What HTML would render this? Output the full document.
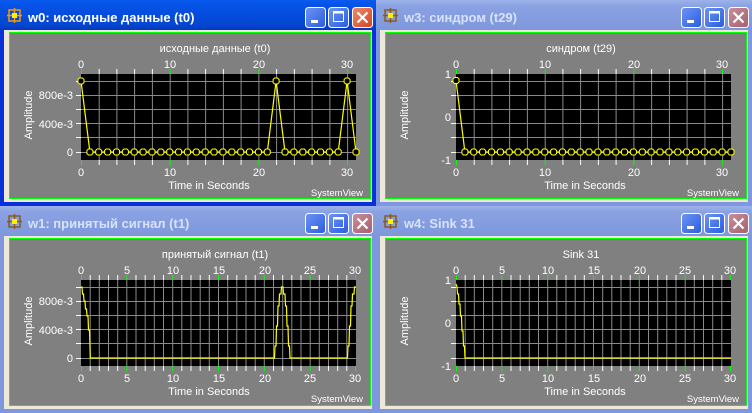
<!DOCTYPE html>
<html><head><meta charset="utf-8"><style>
html,body{margin:0;padding:0;background:#ECE9D8;}
svg{display:block;font-family:"Liberation Sans","DejaVu Sans",sans-serif;}
</style></head><body>
<svg width="752" height="413" viewBox="0 0 752 413" xmlns="http://www.w3.org/2000/svg">
<defs>
<linearGradient id="act" x1="0" y1="0" x2="0" y2="1"><stop offset="0" stop-color="#0A5BF0"/><stop offset="0.15" stop-color="#0653E8"/><stop offset="0.8" stop-color="#0447D2"/><stop offset="1" stop-color="#0339C0"/></linearGradient>
<linearGradient id="ina" x1="0" y1="0" x2="0" y2="1"><stop offset="0" stop-color="#9DB2EA"/><stop offset="0.2" stop-color="#8AA2E2"/><stop offset="1" stop-color="#7E98DC"/></linearGradient>
<linearGradient id="btn" x1="0" y1="0" x2="1" y2="1"><stop offset="0" stop-color="#6E95F5"/><stop offset="1" stop-color="#2A5BDD"/></linearGradient>
<linearGradient id="cls" x1="0" y1="0" x2="1" y2="1"><stop offset="0" stop-color="#F08C6A"/><stop offset="1" stop-color="#D4411F"/></linearGradient>
<linearGradient id="clsi" x1="0" y1="0" x2="1" y2="1"><stop offset="0" stop-color="#C98E9A"/><stop offset="1" stop-color="#A5606E"/></linearGradient>
<marker id="dot" markerWidth="8" markerHeight="8" refX="4" refY="4" markerUnits="userSpaceOnUse"><polygon points="2.5,1 5.5,1 7,2.5 7,5.5 5.5,7 2.5,7 1,5.5 1,2.5" fill="#000" stroke="#FFFF00" stroke-width="1"/></marker>
</defs>

<!-- ===== Window w0 (active) ===== -->
<g>
<rect x="0" y="0" width="376" height="206" fill="#0831D9"/>
<rect x="0" y="0" width="376" height="30" fill="url(#act)"/>
<rect x="4" y="30" width="368" height="172" fill="#ECE9D8"/>
<g transform="translate(8,9)"><rect x="1" y="1" width="11" height="11" fill="none" stroke="#F29A10" stroke-width="1.5"/><line x1="6.5" y1="-1" x2="6.5" y2="14" stroke="#F29A10" stroke-width="1.5"/><line x1="-1" y1="6.5" x2="14" y2="6.5" stroke="#F29A10" stroke-width="1.5"/><rect x="4" y="4" width="5" height="5" fill="#FFF200"/></g>
<text x="28" y="22" font-size="13" font-weight="bold" fill="#fff">w0: исходные данные (t0)</text>
<rect x="305.5" y="7.5" width="20" height="20" rx="3" fill="url(#btn)" stroke="#fff"/><rect x="311" y="20" width="7" height="3" fill="#fff"/>
<rect x="328.5" y="7.5" width="20" height="20" rx="3" fill="url(#btn)" stroke="#fff"/><rect x="333.5" y="11.5" width="10" height="10" fill="none" stroke="#fff"/><rect x="333.5" y="11.5" width="10" height="2" fill="#fff"/>
<rect x="352.5" y="7.5" width="20" height="20" rx="3" fill="url(#cls)" stroke="#fff"/><path d="M357.5 12.5 L367.5 22.5 M367.5 12.5 L357.5 22.5" stroke="#fff" stroke-width="2.2"/>
</g>

<!-- ===== Window w3 ===== -->
<g transform="translate(376,0)">
<rect x="0" y="0" width="376" height="206" fill="#7F97DE"/>
<rect x="0" y="0" width="376" height="30" fill="url(#ina)"/>
<rect x="4" y="30" width="368" height="172" fill="#ECE9D8"/>
<g transform="translate(8,9)"><rect x="1" y="1" width="11" height="11" fill="none" stroke="#8A5A20" stroke-width="1.5"/><line x1="6.5" y1="-1" x2="6.5" y2="14" stroke="#8A5A20" stroke-width="1.5"/><line x1="-1" y1="6.5" x2="14" y2="6.5" stroke="#8A5A20" stroke-width="1.5"/><rect x="4" y="4" width="5" height="5" fill="#FFF200"/></g>
<text x="28" y="22" font-size="13" font-weight="bold" fill="#D8E2FA">w3: синдром (t29)</text>
<rect x="305.5" y="7.5" width="20" height="20" rx="3" fill="url(#btn)" stroke="#fff"/><rect x="311" y="20" width="7" height="3" fill="#fff"/>
<rect x="328.5" y="7.5" width="20" height="20" rx="3" fill="url(#btn)" stroke="#fff"/><rect x="333.5" y="11.5" width="10" height="10" fill="none" stroke="#fff"/><rect x="333.5" y="11.5" width="10" height="2" fill="#fff"/>
<rect x="352.5" y="7.5" width="20" height="20" rx="3" fill="url(#clsi)" stroke="#fff"/><path d="M357.5 12.5 L367.5 22.5 M367.5 12.5 L357.5 22.5" stroke="#fff" stroke-width="2.2"/>
</g>

<!-- ===== Window w1 ===== -->
<g transform="translate(0,206)">
<rect x="0" y="0" width="376" height="207" fill="#7F97DE"/>
<rect x="0" y="0" width="376" height="30" fill="url(#ina)"/>
<rect x="4" y="30" width="368" height="173" fill="#ECE9D8"/>
<g transform="translate(8,9)"><rect x="1" y="1" width="11" height="11" fill="none" stroke="#8A5A20" stroke-width="1.5"/><line x1="6.5" y1="-1" x2="6.5" y2="14" stroke="#8A5A20" stroke-width="1.5"/><line x1="-1" y1="6.5" x2="14" y2="6.5" stroke="#8A5A20" stroke-width="1.5"/><rect x="4" y="4" width="5" height="5" fill="#FFF200"/></g>
<text x="28" y="22" font-size="13" font-weight="bold" fill="#D8E2FA">w1: принятый сигнал (t1)</text>
<rect x="305.5" y="7.5" width="20" height="20" rx="3" fill="url(#btn)" stroke="#fff"/><rect x="311" y="20" width="7" height="3" fill="#fff"/>
<rect x="328.5" y="7.5" width="20" height="20" rx="3" fill="url(#btn)" stroke="#fff"/><rect x="333.5" y="11.5" width="10" height="10" fill="none" stroke="#fff"/><rect x="333.5" y="11.5" width="10" height="2" fill="#fff"/>
<rect x="352.5" y="7.5" width="20" height="20" rx="3" fill="url(#clsi)" stroke="#fff"/><path d="M357.5 12.5 L367.5 22.5 M367.5 12.5 L357.5 22.5" stroke="#fff" stroke-width="2.2"/>
</g>

<!-- ===== Window w4 ===== -->
<g transform="translate(376,206)">
<rect x="0" y="0" width="376" height="207" fill="#7F97DE"/>
<rect x="0" y="0" width="376" height="30" fill="url(#ina)"/>
<rect x="4" y="30" width="368" height="173" fill="#ECE9D8"/>
<g transform="translate(8,9)"><rect x="1" y="1" width="11" height="11" fill="none" stroke="#8A5A20" stroke-width="1.5"/><line x1="6.5" y1="-1" x2="6.5" y2="14" stroke="#8A5A20" stroke-width="1.5"/><line x1="-1" y1="6.5" x2="14" y2="6.5" stroke="#8A5A20" stroke-width="1.5"/><rect x="4" y="4" width="5" height="5" fill="#FFF200"/></g>
<text x="28" y="22" font-size="13" font-weight="bold" fill="#D8E2FA">w4: Sink 31</text>
<rect x="305.5" y="7.5" width="20" height="20" rx="3" fill="url(#btn)" stroke="#fff"/><rect x="311" y="20" width="7" height="3" fill="#fff"/>
<rect x="328.5" y="7.5" width="20" height="20" rx="3" fill="url(#btn)" stroke="#fff"/><rect x="333.5" y="11.5" width="10" height="10" fill="none" stroke="#fff"/><rect x="333.5" y="11.5" width="10" height="2" fill="#fff"/>
<rect x="352.5" y="7.5" width="20" height="20" rx="3" fill="url(#clsi)" stroke="#fff"/><path d="M357.5 12.5 L367.5 22.5 M367.5 12.5 L357.5 22.5" stroke="#fff" stroke-width="2.2"/>
</g>

<!-- ===== Plot panels ===== -->
<!-- panel common: gray with green border -->
<g fill="#808080" stroke="#00FF00" stroke-width="1">
<rect x="9.5" y="32.5" width="361" height="166"/>
<rect x="385.5" y="32.5" width="361" height="166"/>
<rect x="9.5" y="238.5" width="361" height="167"/>
<rect x="385.5" y="238.5" width="361" height="167"/>
</g>

<!-- Plot w0 -->
<g transform="translate(0,0)">
<rect x="81" y="74" width="275" height="86" fill="#000"/>
<g stroke="#8A8A8A" stroke-width="1">
<path d="M81 81.5H356M81 95.5H356M81 109.5H356M81 123.5H356M81 137.5H356M81 152.5H356"/>
<path d="M99.2 74V160M116.9 74V160M134.6 74V160M152.4 74V160M170.2 74V160M187.9 74V160M205.6 74V160M223.4 74V160M241.1 74V160M258.9 74V160M276.6 74V160M294.4 74V160M312.1 74V160M329.9 74V160M347.6 74V160"/>
</g>
<g stroke="#fff"><path d="M99.2 69V74M116.9 69V74M134.6 69V74M152.4 69V74M187.9 69V74M205.6 69V74M223.4 69V74M241.1 69V74M276.6 69V74M294.4 69V74M312.1 69V74M329.9 69V74M99.2 160V165M116.9 160V165M134.6 160V165M152.4 160V165M187.9 160V165M205.6 160V165M223.4 160V165M241.1 160V165M276.6 160V165M294.4 160V165M312.1 160V165M329.9 160V165M76 81.5H81M76 109.5H81M76 137.5H81"/></g>
<g stroke="#00FF00"><path d="M81.5 69V74M170.2 69V74M258.9 69V74M347.6 69V74M81.5 160V165M170.2 160V165M258.9 160V165M347.6 160V165"/></g>
<g stroke="#fff"><path d="M76 95.5H81M76 123.5H81M76 152.5H81"/></g>
<polyline fill="none" stroke="#FFFF00" stroke-width="1.2" marker-start="url(#dot)" marker-mid="url(#dot)" marker-end="url(#dot)" points="81,81 89.9,152 98.7,152 107.6,152 116.5,152 125.4,152 134.2,152 143.1,152 152,152 160.8,152 169.7,152 178.6,152 187.4,152 196.3,152 205.2,152 214,152 222.9,152 231.8,152 240.7,152 249.5,152 258.4,152 267.3,152 276.1,81 285,152 293.9,152 302.8,152 311.6,152 320.5,152 329.4,152 338.2,152 347.1,81 356,152"/>
<g fill="#fff" font-size="11">
<text x="215" y="52" text-anchor="middle">исходные данные (t0)</text>
<text x="81" y="68" text-anchor="middle">0</text><text x="170" y="68" text-anchor="middle">10</text><text x="259" y="68" text-anchor="middle">20</text><text x="347" y="68" text-anchor="middle">30</text>
<text x="81" y="176" text-anchor="middle">0</text><text x="170" y="176" text-anchor="middle">10</text><text x="259" y="176" text-anchor="middle">20</text><text x="347" y="176" text-anchor="middle">30</text>
<text x="73" y="99" text-anchor="end">800e-3</text><text x="73" y="128" text-anchor="end">400e-3</text><text x="73" y="156" text-anchor="end">0</text>
<text x="209" y="189" text-anchor="middle">Time in Seconds</text>
<text x="363" y="196" text-anchor="end" font-size="9.5">SystemView</text>
<text transform="translate(32,115) rotate(-90)" text-anchor="middle">Amplitude</text>
</g>
</g>

<!-- Plot w3 -->
<g transform="translate(376,0)">
<rect x="80" y="74" width="275" height="86" fill="#000"/>
<g stroke="#8A8A8A" stroke-width="1">
<path d="M80 81.5H355M80 95.5H355M80 109.5H355M80 123.5H355M80 137.5H355M80 152.5H355"/>
<path d="M98.2 74V160M115.9 74V160M133.6 74V160M151.4 74V160M169.2 74V160M186.9 74V160M204.6 74V160M222.4 74V160M240.1 74V160M257.9 74V160M275.6 74V160M293.4 74V160M311.1 74V160M328.9 74V160M346.6 74V160"/>
</g>
<g stroke="#fff"><path d="M98.2 69V74M115.9 69V74M133.6 69V74M151.4 69V74M186.9 69V74M204.6 69V74M222.4 69V74M240.1 69V74M275.6 69V74M293.4 69V74M311.1 69V74M328.9 69V74M98.2 160V165M115.9 160V165M133.6 160V165M151.4 160V165M186.9 160V165M204.6 160V165M222.4 160V165M240.1 160V165M275.6 160V165M293.4 160V165M311.1 160V165M328.9 160V165M75 81.5H80M75 95.5H80M75 109.5H80M75 123.5H80M75 137.5H80M75 152.5H80"/></g>
<g stroke="#00FF00"><path d="M80.5 69V74M169.2 69V74M257.9 69V74M346.6 69V74M80.5 160V165M169.2 160V165M257.9 160V165M346.6 160V165"/></g>
<polyline fill="none" stroke="#FFFF00" stroke-width="1.2" marker-start="url(#dot)" marker-mid="url(#dot)" marker-end="url(#dot)" points="80,80.5 88.9,152 97.7,152 106.6,152 115.5,152 124.4,152 133.2,152 142.1,152 151,152 159.8,152 168.7,152 177.6,152 186.4,152 195.3,152 204.2,152 213,152 221.9,152 230.8,152 239.7,152 248.5,152 257.4,152 266.3,152 275.1,152 284,152 292.9,152 301.8,152 310.6,152 319.5,152 328.4,152 337.2,152 346.1,152 355,152"/>
<g fill="#fff" font-size="11">
<text x="205" y="52" text-anchor="middle">синдром (t29)</text>
<text x="80" y="68" text-anchor="middle">0</text><text x="169" y="68" text-anchor="middle">10</text><text x="258" y="68" text-anchor="middle">20</text><text x="346" y="68" text-anchor="middle">30</text>
<text x="80" y="176" text-anchor="middle">0</text><text x="169" y="176" text-anchor="middle">10</text><text x="258" y="176" text-anchor="middle">20</text><text x="346" y="176" text-anchor="middle">30</text>
<text x="75" y="78" text-anchor="end">1</text><text x="75" y="121" text-anchor="end">0</text><text x="75" y="164" text-anchor="end">-1</text>
<text x="209" y="189" text-anchor="middle">Time in Seconds</text>
<text x="363" y="196" text-anchor="end" font-size="9.5">SystemView</text>
<text transform="translate(32,115) rotate(-90)" text-anchor="middle">Amplitude</text>
</g>
</g>

<!-- Plot w1 -->
<g transform="translate(0,206)">
<rect x="81" y="74" width="275" height="86" fill="#000"/>
<g stroke="#8A8A8A" stroke-width="1">
<path d="M81 81.5H356M81 95.5H356M81 109.5H356M81 123.5H356M81 137.5H356M81 152.5H356"/>
<path d="M90.2 74V160M99.3 74V160M108.5 74V160M117.7 74V160M126.8 74V160M136 74V160M145.2 74V160M154.3 74V160M163.5 74V160M172.7 74V160M181.8 74V160M191 74V160M200.2 74V160M209.3 74V160M218.5 74V160M227.7 74V160M236.8 74V160M246 74V160M255.2 74V160M264.3 74V160M273.5 74V160M282.7 74V160M291.8 74V160M301 74V160M310.2 74V160M319.3 74V160M328.5 74V160M337.7 74V160M346.8 74V160"/>
</g>
<g stroke="#fff"><path d="M90.2 69V74M99.3 69V74M108.5 69V74M117.7 69V74M136 69V74M145.2 69V74M154.3 69V74M163.5 69V74M181.8 69V74M191 69V74M200.2 69V74M209.3 69V74M227.7 69V74M236.8 69V74M246 69V74M255.2 69V74M273.5 69V74M282.7 69V74M291.8 69V74M301 69V74M319.3 69V74M328.5 69V74M337.7 69V74M346.8 69V74M90.2 160V165M99.3 160V165M108.5 160V165M117.7 160V165M136 160V165M145.2 160V165M154.3 160V165M163.5 160V165M181.8 160V165M191 160V165M200.2 160V165M209.3 160V165M227.7 160V165M236.8 160V165M246 160V165M255.2 160V165M273.5 160V165M282.7 160V165M291.8 160V165M301 160V165M319.3 160V165M328.5 160V165M337.7 160V165M346.8 160V165M76 81.5H81M76 95.5H81M76 109.5H81M76 123.5H81M76 137.5H81M76 152.5H81"/></g>
<g stroke="#00FF00"><path d="M81.5 69V74M126.8 69V74M172.7 69V74M218.5 69V74M264.3 69V74M310.2 69V74M355.5 69V74M81.5 160V165M126.8 160V165M172.7 160V165M218.5 160V165M264.3 160V165M310.2 160V165M355.5 160V165"/></g>
<polyline fill="none" stroke="#FFFF00" stroke-width="1.2" points="81,81 82,81 82.5,88 83.5,88 84,95 85,95 85.5,103 86.5,103 87,110 88,110 88.5,124 89.5,124 90,141 90.3,152 274.5,152 275,140 276,140 276.5,120 277.5,120 278,100 279,100 279.5,88 281,88 281.5,81 283,81 283.5,88 285,88 285.5,100 286.5,100 287,120 288,120 288.5,140 289.5,140 290,152 347.5,152 348,140 349,140 349.5,120 350.5,120 351,100 352,100 352.5,88 354,88 354.5,81 356,81"/>
<g fill="#fff" font-size="11">
<text x="215" y="52" text-anchor="middle">принятый сигнал (t1)</text>
<text x="81" y="68" text-anchor="middle">0</text><text x="127" y="68" text-anchor="middle">5</text><text x="173" y="68" text-anchor="middle">10</text><text x="219" y="68" text-anchor="middle">15</text><text x="265" y="68" text-anchor="middle">20</text><text x="310" y="68" text-anchor="middle">25</text><text x="355" y="68" text-anchor="middle">30</text>
<text x="81" y="176" text-anchor="middle">0</text><text x="127" y="176" text-anchor="middle">5</text><text x="173" y="176" text-anchor="middle">10</text><text x="219" y="176" text-anchor="middle">15</text><text x="265" y="176" text-anchor="middle">20</text><text x="310" y="176" text-anchor="middle">25</text><text x="355" y="176" text-anchor="middle">30</text>
<text x="73" y="99" text-anchor="end">800e-3</text><text x="73" y="128" text-anchor="end">400e-3</text><text x="73" y="156" text-anchor="end">0</text>
<text x="209" y="189" text-anchor="middle">Time in Seconds</text>
<text x="363" y="196" text-anchor="end" font-size="9.5">SystemView</text>
<text transform="translate(32,115) rotate(-90)" text-anchor="middle">Amplitude</text>
</g>
</g>

<!-- Plot w4 -->
<g transform="translate(376,206)">
<rect x="80" y="74" width="275" height="86" fill="#000"/>
<g stroke="#8A8A8A" stroke-width="1">
<path d="M80 81.5H355M80 95.5H355M80 109.5H355M80 123.5H355M80 137.5H355M80 152.5H355"/>
<path d="M89.2 74V160M98.3 74V160M107.5 74V160M116.7 74V160M125.8 74V160M135 74V160M144.2 74V160M153.3 74V160M162.5 74V160M171.7 74V160M180.8 74V160M190 74V160M199.2 74V160M208.3 74V160M217.5 74V160M226.7 74V160M235.8 74V160M245 74V160M254.2 74V160M263.3 74V160M272.5 74V160M281.7 74V160M290.8 74V160M300 74V160M309.2 74V160M318.3 74V160M327.5 74V160M336.7 74V160M345.8 74V160"/>
</g>
<g stroke="#fff"><path d="M89.2 69V74M98.3 69V74M107.5 69V74M116.7 69V74M135 69V74M144.2 69V74M153.3 69V74M162.5 69V74M180.8 69V74M190 69V74M199.2 69V74M208.3 69V74M226.7 69V74M235.8 69V74M245 69V74M254.2 69V74M272.5 69V74M281.7 69V74M290.8 69V74M300 69V74M318.3 69V74M327.5 69V74M336.7 69V74M345.8 69V74M89.2 160V165M98.3 160V165M107.5 160V165M116.7 160V165M135 160V165M144.2 160V165M153.3 160V165M162.5 160V165M180.8 160V165M190 160V165M199.2 160V165M208.3 160V165M226.7 160V165M235.8 160V165M245 160V165M254.2 160V165M272.5 160V165M281.7 160V165M290.8 160V165M300 160V165M318.3 160V165M327.5 160V165M336.7 160V165M345.8 160V165M75 81.5H80M75 95.5H80M75 109.5H80M75 123.5H80M75 137.5H80M75 152.5H80"/></g>
<g stroke="#00FF00"><path d="M80.5 69V74M125.8 69V74M171.7 69V74M217.5 69V74M263.3 69V74M309.2 69V74M354.5 69V74M80.5 160V165M125.8 160V165M171.7 160V165M217.5 160V165M263.3 160V165M309.2 160V165M354.5 160V165"/></g>
<polyline fill="none" stroke="#FFFF00" stroke-width="1.2" points="80,78 81,81 81.5,88 82.5,88 83,98 84,98 84.5,110 85.5,110 86,125 87,125 87.5,140 88.5,140 89,152 355,152"/>
<g fill="#fff" font-size="11">
<text x="205" y="52" text-anchor="middle">Sink 31</text>
<text x="80" y="68" text-anchor="middle">0</text><text x="126" y="68" text-anchor="middle">5</text><text x="172" y="68" text-anchor="middle">10</text><text x="218" y="68" text-anchor="middle">15</text><text x="264" y="68" text-anchor="middle">20</text><text x="309" y="68" text-anchor="middle">25</text><text x="354" y="68" text-anchor="middle">30</text>
<text x="80" y="176" text-anchor="middle">0</text><text x="126" y="176" text-anchor="middle">5</text><text x="172" y="176" text-anchor="middle">10</text><text x="218" y="176" text-anchor="middle">15</text><text x="264" y="176" text-anchor="middle">20</text><text x="309" y="176" text-anchor="middle">25</text><text x="354" y="176" text-anchor="middle">30</text>
<text x="75" y="78" text-anchor="end">1</text><text x="75" y="121" text-anchor="end">0</text><text x="75" y="164" text-anchor="end">-1</text>
<text x="209" y="189" text-anchor="middle">Time in Seconds</text>
<text x="363" y="196" text-anchor="end" font-size="9.5">SystemView</text>
<text transform="translate(32,115) rotate(-90)" text-anchor="middle">Amplitude</text>
</g>
</g>
</svg>
</body></html>
